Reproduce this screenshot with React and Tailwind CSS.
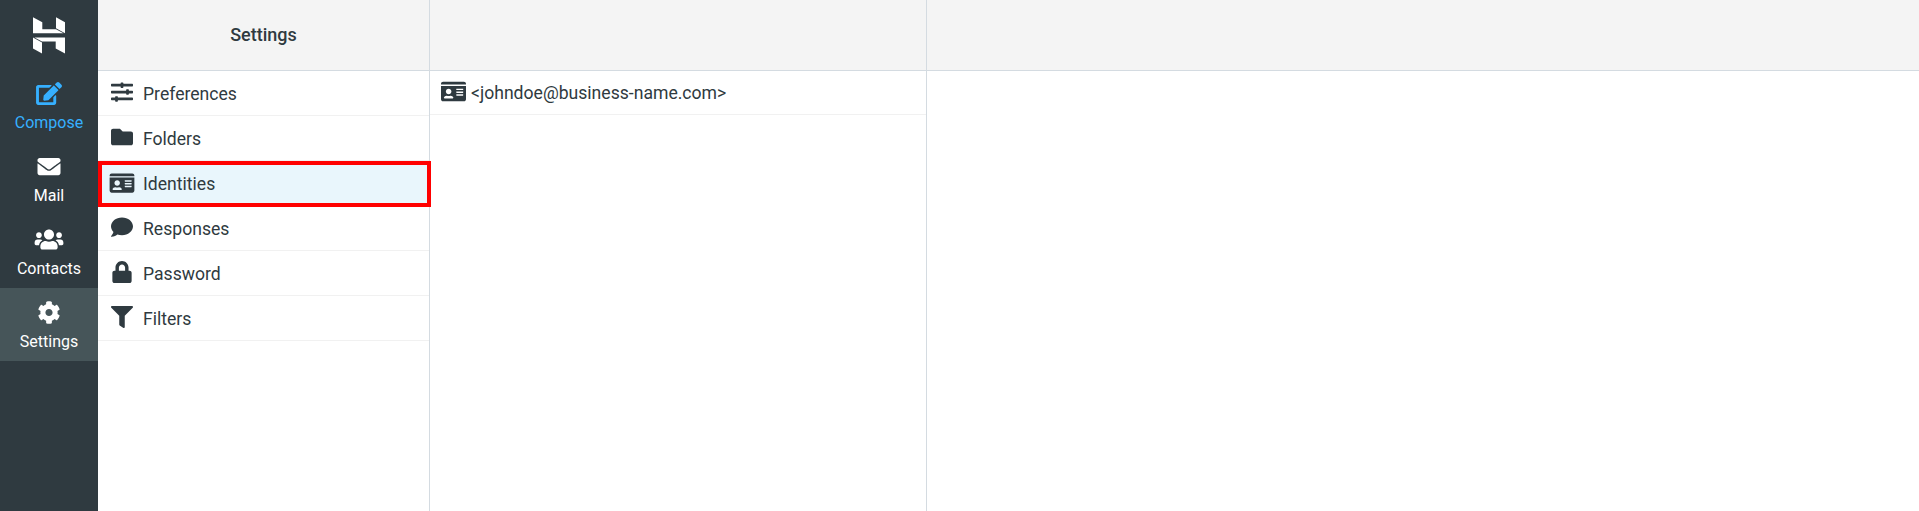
import { FaEdit, FaEnvelope, FaUsers, FaCog, FaSlidersH, FaFolder, FaIdCard, FaComment, FaLock, FaFilter } from 'react-icons/fa'

const navItems = [
  { label: 'Compose', icon: FaEdit, color: 'text-[#36b0ff]' },
  { label: 'Mail', icon: FaEnvelope, color: 'text-white' },
  { label: 'Contacts', icon: FaUsers, color: 'text-white' },
  { label: 'Settings', icon: FaCog, color: 'text-white', active: true },
]

const settingsItems = [
  { label: 'Preferences', icon: FaSlidersH },
  { label: 'Folders', icon: FaFolder },
  { label: 'Identities', icon: FaIdCard, selected: true },
  { label: 'Responses', icon: FaComment },
  { label: 'Password', icon: FaLock },
  { label: 'Filters', icon: FaFilter },
]

function Logo() {
  return (
    <svg width="32" height="37" viewBox="0 0 32 37" fill="white">
      <polygon points="0,0.3 9.3,5.3 9.3,12.3 23,12.3 30.5,16.3 0,16.3" />
      <polygon points="32,36.4 22.7,31.4 22.7,24.4 9,24.4 1.5,20.4 32,20.4" />
      <polygon points="23,0.3 32,5.3 32,16.3 23,11.3" />
      <polygon points="9,36.4 0,31.4 0,20.4 9,25.4" />
    </svg>
  )
}

export default function App() {
  return (
    <div className="flex h-[511px] w-full bg-white font-['Roboto',sans-serif] text-[16px] text-[#2f3a40]">
      {/* main nav */}
      <div className="flex w-[98px] shrink-0 flex-col bg-[#2f3a40]">
        <div className="flex h-[69px] items-start justify-center pt-[17px]">
          <Logo />
        </div>
        {navItems.map((item) => (
          <div
            key={item.label}
            className={`flex h-[73px] flex-col items-center gap-[6px] pt-[13px] text-[16px] leading-6 ${item.color} ${item.active ? 'bg-[#465559]' : ''}`}
          >
            <item.icon className="h-[23px] w-[30px] shrink-0" />
            <span>{item.label}</span>
          </div>
        ))}
      </div>

      {/* settings list */}
      <div className="flex w-[332px] shrink-0 flex-col border-r border-[#d4dbe1]">
        <div className="flex h-[71px] shrink-0 items-center justify-center border-b border-[#d4dbe1] bg-[#f4f4f4] pb-[2px] text-[18px] font-medium">
          Settings
        </div>
        {settingsItems.map((item) => (
          <div
            key={item.label}
            className={`flex shrink-0 items-center gap-[8px] border-b pl-[11px] ${item.selected ? '-mr-[2px] -mb-px h-[46px] border-transparent bg-[#e9f6fc] outline-4 -outline-offset-4 outline-[#ff0000]' : 'h-[45px] border-[#f1f1f1]'}`}
          >
            <item.icon className="mb-[2px] h-[22px] w-[26px] shrink-0" />
            <span className="pt-[2px] text-[17.6px]">{item.label}</span>
          </div>
        ))}
      </div>

      {/* identities list */}
      <div className="flex w-[497px] shrink-0 flex-col border-r border-[#d4dbe1]">
        <div className="h-[71px] shrink-0 border-b border-[#d4dbe1] bg-[#f4f4f4]" />
        <div className="flex h-[44px] shrink-0 items-center gap-[5px] border-b border-[#f1f1f1] pl-[11px]">
          <FaIdCard className="mb-[2px] h-[25px] w-[25px] shrink-0" />
          <span className="pt-[2px] text-[17.6px]">&lt;johndoe@business-name.com&gt;</span>
        </div>
      </div>

      {/* content */}
      <div className="flex flex-1 flex-col">
        <div className="h-[71px] shrink-0 border-b border-[#d4dbe1] bg-[#f4f4f4]" />
      </div>
    </div>
  )
}
